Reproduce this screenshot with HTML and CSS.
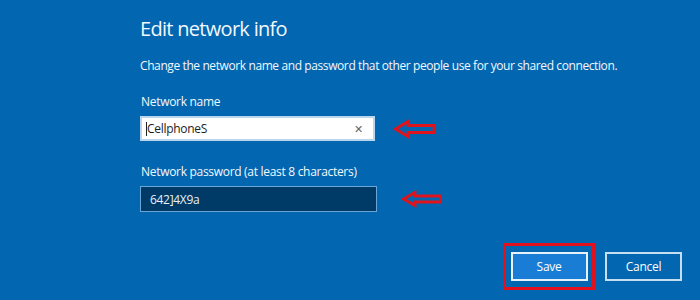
FILE: index.html
```html
<!DOCTYPE html>
<html>
<head>
<meta charset="utf-8">
<link rel="stylesheet" href="styles.css">
</head>
<body>
<div class="page">
  <h1 class="title">Edit network info</h1>
  <p class="desc">Change the network name and password that other people use for your shared connection.</p>

  <div class="field">
    <div class="label">Network name</div>
    <div class="row">
      <div class="input light"><span class="caret"></span><span class="value">CellphoneS</span><span class="clear">&#x2715;</span></div>
      <svg class="arrow a1" width="44" height="20" viewBox="0 0 44 20"><polygon points="2.5,10 15,2.5 15,6.5 41,6.5 41,13.5 15,13.5 15,17.5" fill="none" stroke="#e0141c" stroke-width="2.8" stroke-linejoin="miter"/></svg>
    </div>
  </div>

  <div class="field second">
    <div class="label">Network password (at least 8 characters)</div>
    <div class="row">
      <div class="input dark"><span class="value">642]4X9a</span></div>
      <svg class="arrow a2" width="42" height="18" viewBox="0 0 42 18"><polygon points="2.5,9 14,2.5 14,6 39.5,6 39.5,12 14,12 14,15.5" fill="none" stroke="#e0141c" stroke-width="2.8" stroke-linejoin="miter"/></svg>
    </div>
  </div>

  <div class="actions">
    <div class="highlight"><button class="btn save">Save</button></div>
    <button class="btn cancel">Cancel</button>
  </div>
</div>
</body>
</html>
```
FILE: styles.css
```css
html, body {
  margin: 0;
  padding: 0;
  background: #0266b0;
  width: 700px;
  height: 300px;
  overflow: hidden;
}
.page {
  font-family: "Open Sans", "Noto Sans", sans-serif;
  color: #ffffff;
  padding: 15px 0 0 140px;
  box-sizing: border-box;
  height: 300px;
  position: relative;
}
.title {
  margin: 0;
  font-weight: 400;
  font-size: 20px;
  line-height: 28px;
  letter-spacing: -0.7px;
  color: #f2f8fd;
}
.desc {
  margin: 14px 0 0 0;
  font-size: 12px;
  line-height: 18px;
  letter-spacing: -0.4px;
  color: #f2f8fd;
}
.field {
  margin-top: 19px;
}
.field.second {
  margin-top: 23px;
}
.label {
  font-size: 12px;
  line-height: 16px;
  letter-spacing: -0.3px;
  margin-left: 1px;
  color: #f2f8fd;
}
.row {
  display: flex;
  align-items: center;
  margin-top: 6px;
}
.input {
  height: 25px;
  box-sizing: border-box;
  display: flex;
  align-items: center;
  font-size: 12px;
  letter-spacing: -0.3px;
}
.input.light {
  width: 235px;
  background: #ffffff;
  border: 2px solid #b9d6ee;
  color: #1d1d1d;
  padding: 0 10px 0 4px;
}
.caret {
  width: 1px;
  height: 14px;
  background: #222;
}
.input.light .value {
  flex: 1;
}
.clear {
  font-size: 11px;
  color: #666;
}
.input.dark {
  width: 237px;
  height: 26px;
  background: #003a66;
  border: 1.5px solid #6aa7d8;
  color: #e8f1f9;
  padding: 0 9px;
}
.arrow {
  display: block;
}
.arrow.a1 {
  margin-left: 18px;
}
.arrow.a2 {
  margin-left: 24px;
}
.actions {
  position: absolute;
  left: 503px;
  top: 243px;
  display: flex;
  align-items: center;
}
.highlight {
  border: 3px solid #e3101e;
  padding: 6px 4px;
  width: 92px;
  height: 47px;
  box-sizing: border-box;
  display: flex;
  align-items: center;
  justify-content: center;
}
.btn {
  font-family: "Open Sans", "Noto Sans", sans-serif;
  font-size: 12px;
  letter-spacing: -0.3px;
  color: #ffffff;
  width: 77px;
  height: 29px;
  box-sizing: border-box;
  border: 2px solid #e6f1fa;
  padding: 0;
}
.btn.save {
  background: #1a7dd5;
}
.btn.cancel {
  background: #0266b0;
  border-color: #c5def2;
  margin-left: 10px;
}
```
